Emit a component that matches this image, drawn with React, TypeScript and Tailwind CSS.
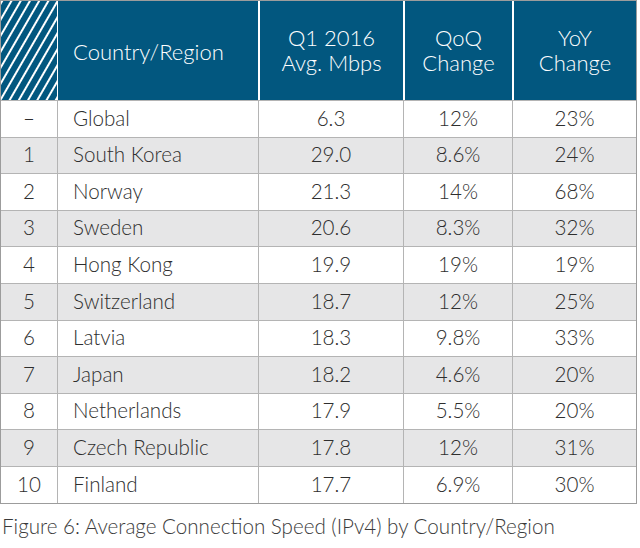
import React from "react";

const rows = [
  { r: "–", c: "Global", m: "6.3", q: "12%", y: "23%", h: "h-[37px]" },
  { r: "1", c: "South Korea", m: "29.0", q: "8.6%", y: "24%", h: "h-[36px]" },
  { r: "2", c: "Norway", m: "21.3", q: "14%", y: "68%", h: "h-[37px]" },
  { r: "3", c: "Sweden", m: "20.6", q: "8.3%", y: "32%", h: "h-[36px]" },
  { r: "4", c: "Hong Kong", m: "19.9", q: "19%", y: "19%", h: "h-[37px]" },
  { r: "5", c: "Switzerland", m: "18.7", q: "12%", y: "25%", h: "h-[37px]" },
  { r: "6", c: "Latvia", m: "18.3", q: "9.8%", y: "33%", h: "h-[36px]" },
  { r: "7", c: "Japan", m: "18.2", q: "4.6%", y: "20%", h: "h-[37px]" },
  { r: "8", c: "Netherlands", m: "17.9", q: "5.5%", y: "20%", h: "h-[36px]" },
  { r: "9", c: "Czech Republic", m: "17.8", q: "12%", y: "31%", h: "h-[37px]" },
  { r: "10", c: "Finland", m: "17.7", q: "6.9%", y: "30%", h: "h-[37px]" },
];

function Stripes() {
  return (
    <svg width="56" height="99" className="block">
      <defs>
        <pattern
          id="st"
          width="8"
          height="20"
          patternUnits="userSpaceOnUse"
          patternTransform="rotate(30)"
        >
          <rect x="0" y="0" width="8" height="20" fill="#02577f" />
          <rect x="0" y="0" width="2" height="20" fill="#ffffff" />
        </pattern>
      </defs>
      <rect width="56" height="99" fill="url(#st)" />
    </svg>
  );
}

export default function App() {
  return (
    <div
      className="w-[640px] h-[548px] bg-white font-light"
      style={{ fontFamily: "Lato, 'Open Sans', sans-serif" }}
    >
      <div className="w-[637px] border border-[#9c9c9c]">
        <div className="flex h-[99px] bg-[#02577f] text-white text-[22px] leading-[25px]">
          <div className="w-[56px]">
            <Stripes />
          </div>
          <div className="w-[201px] border-l border-white flex items-center pl-[15px] pt-[1px]">
            Country/Region
          </div>
          <div className="w-[145px] border-l-2 border-white flex items-center justify-center text-center pb-[2px]">
            Q1 2016
            <br />
            Avg. Mbps
          </div>
          <div className="w-[109px] border-l-2 border-white flex items-center justify-center text-center pb-[2px]">
            QoQ
            <br />
            Change
          </div>
          <div className="w-[124px] border-l-2 border-white flex items-center justify-center text-center pb-[2px]">
            YoY
            <br />
            Change
          </div>
        </div>
        {rows.map((row, i) => (
          <div
            key={i}
            className={`flex ${row.h} border-t border-[#b4b4b4] text-[20.6px] text-[#2e2e2e] ${
              i % 2 === 1 ? "bg-[#e6e6e7]" : "bg-white"
            }`}
          >
            <div className="w-[56px] flex items-center justify-center pb-[2px]">{row.r}</div>
            <div className="w-[201px] border-l border-[#b4b4b4] flex items-center pl-[15px] pb-[2px]">
              {row.c}
            </div>
            <div className="w-[145px] border-l border-[#b4b4b4] flex items-center justify-center pb-[2px]">
              {row.m}
            </div>
            <div className="w-[109px] border-l border-[#b4b4b4] flex items-center justify-center pb-[2px]">
              {row.q}
            </div>
            <div className="w-[124px] border-l border-[#b4b4b4] flex items-center justify-center pb-[2px]">
              {row.y}
            </div>
          </div>
        ))}
      </div>
      <div className="mt-[10px] pl-[2px] text-[20.6px] text-[#3a3a3a] leading-[24px]">
        Figure 6: Average Connection Speed (IPv4) by Country/Region
      </div>
    </div>
  );
}
